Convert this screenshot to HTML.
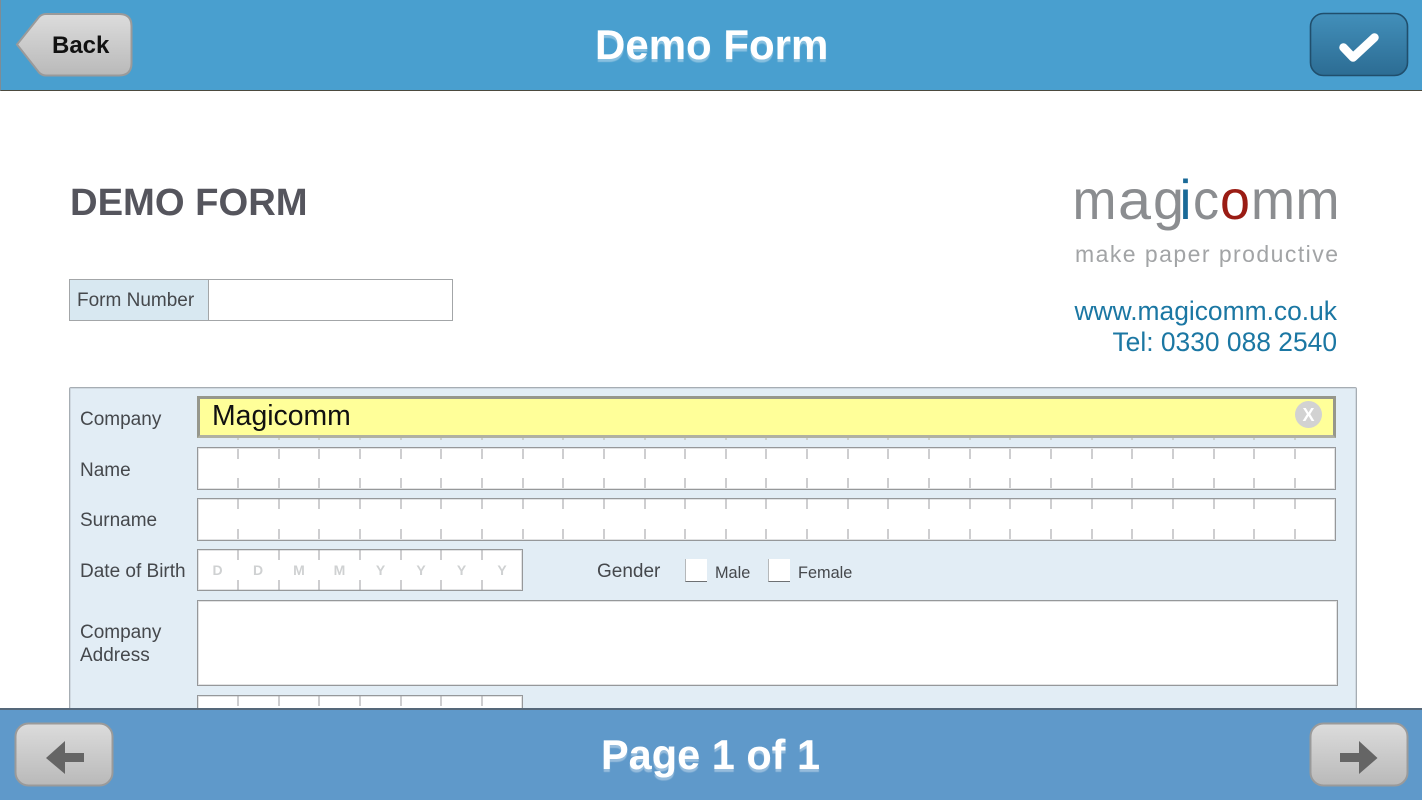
<!DOCTYPE html>
<html lang="en">
<head>
<meta charset="utf-8">
<title>Demo Form</title>
<style>
html,body{margin:0;padding:0;background:#fff}
#p{position:relative;width:1422px;height:800px;overflow:hidden;background:#fff;font-family:"Liberation Sans",sans-serif;filter:blur(.35px)}
.a{position:absolute;white-space:nowrap}
.l{position:absolute;white-space:nowrap;font-size:19px;color:#45484c;line-height:22px;left:80px}
.t{position:absolute;white-space:nowrap;font-weight:bold;color:#fff;font-size:42px;line-height:48px;text-shadow:0 3px 1px rgba(255,255,255,.35)}
.f{position:absolute;box-sizing:border-box;background:#fff;border:1px solid #96989a;box-shadow:inset 0 0 0 1px rgba(160,163,165,.3)}
svg{position:absolute;left:0;top:0}
</style>
</head>
<body>
<div id="p">
  <div class="a" style="left:70px;top:184px;font-size:38.2px;line-height:38px;font-weight:bold;color:#55555d">DEMO FORM</div>

  <!-- Form number -->
  <div class="a" style="left:69px;top:279px;width:384px;height:42px;box-sizing:border-box;background:#fff;border:1px solid #a3a6a8"></div>
  <div class="a" style="left:70px;top:280px;width:139px;height:40px;box-sizing:border-box;background:#d8e8f1;border-right:1px solid #a3a6a8"></div>
  <div class="l" style="left:77px;top:290px">Form Number</div>

  <!-- Logo -->
  <svg width="1422" height="800" viewBox="0 0 1422 800">
    <g font-family="Liberation Sans" font-size="56" fill="#8b8d90">
      <text x="1072.500" y="219" textLength="44" lengthAdjust="spacingAndGlyphs">m</text>
      <text x="1118" y="219" textLength="33" lengthAdjust="spacingAndGlyphs">a</text>
      <text x="1153" y="219" textLength="31" lengthAdjust="spacingAndGlyphs">g</text>
      <text x="1179.500" y="219" textLength="12" lengthAdjust="spacingAndGlyphs" fill="#1a6a98">i</text>
      <text x="1193" y="219" textLength="26" lengthAdjust="spacingAndGlyphs">c</text>
      <text x="1220" y="219" textLength="30" lengthAdjust="spacingAndGlyphs" fill="#9a1c14">o</text>
      <text x="1251" y="219" textLength="44" lengthAdjust="spacingAndGlyphs">m</text>
      <text x="1295.500" y="219" textLength="44" lengthAdjust="spacingAndGlyphs">m</text>
    </g>
    <text x="1075" y="262" font-family="Liberation Sans" font-size="23" textLength="263" lengthAdjust="spacing" fill="#a2a4a6">make paper productive</text>
  </svg>
  <div class="a" style="right:85px;top:296px;font-size:26.4px;line-height:31px;color:#1b77a3;text-align:right">www.magicomm.co.uk<br>Tel: 0330 088 2540</div>

  <!-- Panel -->
  <div class="a" style="left:69px;top:387px;width:1288px;height:340px;box-sizing:border-box;background:#e2edf5;border:1px solid #a6adb3;box-shadow:inset 0 0 0 1px rgba(166,173,179,.3);border-radius:2px"></div>

  <div class="l" style="top:409px">Company</div>
  <div class="l" style="top:460px">Name</div>
  <div class="l" style="top:510px">Surname</div>
  <div class="l" style="top:561px">Date of Birth</div>
  <div class="l" style="top:622px">Company</div>
  <div class="l" style="top:645px">Address</div>

  <div class="a" style="left:197px;top:396px;width:1139px;height:42px;box-sizing:border-box;background:#ffff99;border:3px solid #96978c;border-bottom-color:#b0b1a2"></div>
  <div class="a" style="left:212px;top:399px;font-size:28.4px;line-height:34px;color:#111">Magicomm</div>
  <div class="a" style="left:1295px;top:401px;width:27px;height:27px;border-radius:50%;background:#d2d2d2"></div>
  <div class="a" style="left:1295px;top:402px;width:27px;height:27px;line-height:27px;text-align:center;font-size:18px;font-weight:bold;color:#fff">X</div>

  <div class="f" style="left:197px;top:447px;width:1139px;height:43px"></div>
  <div class="f" style="left:197px;top:498px;width:1139px;height:43px"></div>
  <div class="f" style="left:197px;top:549px;width:326px;height:42px"></div>
  <div class="f" style="left:197px;top:600px;width:1141px;height:86px"></div>
  <div class="f" style="left:197px;top:695px;width:326px;height:42px"></div>

  <svg width="1422" height="800" viewBox="0 0 1422 800">
    <g stroke="#9c9ea0" stroke-width="1" fill="none">
      <path d="M238 449v10M279 449v10M319 449v10M360 449v10M401 449v10M441 449v10M482 449v10M523 449v10M563 449v10M604 449v10M645 449v10M685 449v10M726 449v10M766 449v10M807 449v10M848 449v10M888 449v10M929 449v10M970 449v10M1010 449v10M1051 449v10M1092 449v10M1132 449v10M1173 449v10M1214 449v10M1254 449v10M1295 449v10"/>
      <path d="M238 478v10M279 478v10M319 478v10M360 478v10M401 478v10M441 478v10M482 478v10M523 478v10M563 478v10M604 478v10M645 478v10M685 478v10M726 478v10M766 478v10M807 478v10M848 478v10M888 478v10M929 478v10M970 478v10M1010 478v10M1051 478v10M1092 478v10M1132 478v10M1173 478v10M1214 478v10M1254 478v10M1295 478v10"/>
      <path d="M238 499v10M279 499v10M319 499v10M360 499v10M401 499v10M441 499v10M482 499v10M523 499v10M563 499v10M604 499v10M645 499v10M685 499v10M726 499v10M766 499v10M807 499v10M848 499v10M888 499v10M929 499v10M970 499v10M1010 499v10M1051 499v10M1092 499v10M1132 499v10M1173 499v10M1214 499v10M1254 499v10M1295 499v10"/>
      <path d="M238 529v10M279 529v10M319 529v10M360 529v10M401 529v10M441 529v10M482 529v10M523 529v10M563 529v10M604 529v10M645 529v10M685 529v10M726 529v10M766 529v10M807 529v10M848 529v10M888 529v10M929 529v10M970 529v10M1010 529v10M1051 529v10M1092 529v10M1132 529v10M1173 529v10M1214 529v10M1254 529v10M1295 529v10"/>
      <path d="M238 550v10M279 550v10M319 550v10M360 550v10M401 550v10M441 550v10M482 550v10M238 580v10M279 580v10M319 580v10M360 580v10M401 580v10M441 580v10M482 580v10"/>
      <path d="M238 696v10M279 696v10M319 696v10M360 696v10M401 696v10M441 696v10M482 696v10"/>
      <path stroke="#b5b6a8" d="M238 438v2M279 438v2M319 438v2M360 438v2M401 438v2M441 438v2M482 438v2M523 438v2M563 438v2M604 438v2M645 438v2M685 438v2M726 438v2M766 438v2M807 438v2M848 438v2M888 438v2M929 438v2M970 438v2M1010 438v2M1051 438v2M1092 438v2M1132 438v2M1173 438v2M1214 438v2M1254 438v2M1295 438v2"/>
    </g>
    <g font-family="Liberation Sans" font-weight="bold" font-size="14" fill="#cfd1d2" text-anchor="middle">
      <text x="217.500" y="575">D</text><text x="258" y="575">D</text><text x="299" y="575">M</text><text x="339.500" y="575">M</text><text x="380.500" y="575">Y</text><text x="421" y="575">Y</text><text x="461.500" y="575">Y</text><text x="502" y="575">Y</text>
    </g>
  </svg>

  <div class="l" style="left:597px;top:561px">Gender</div>
  <div class="a" style="left:685px;top:559px;width:22px;height:23px;box-sizing:border-box;background:#fff;border-left:1px solid #b5b8ba;border-bottom:1px solid #6d7073"></div>
  <div class="a" style="left:768px;top:559px;width:22px;height:23px;box-sizing:border-box;background:#fff;border-left:1px solid #b5b8ba;border-bottom:1px solid #6d7073"></div>
  <div class="a" style="left:715px;top:563px;font-size:16.3px;line-height:20px;color:#45484c">Male</div>
  <div class="a" style="left:798px;top:563px;font-size:16.3px;line-height:20px;color:#45484c">Female</div>

  <!-- Header -->
  <div class="a" style="left:0;top:0;width:1422px;height:91px;box-sizing:border-box;background:#499fcf;border-bottom:1px solid #4c4a3e;border-left:1px solid #7d8c96"></div>
  <div class="t" style="left:595px;top:21px">Demo Form</div>

  <!-- Footer -->
  <div class="a" style="left:0;top:708px;width:1422px;height:92px;box-sizing:border-box;background:#5f99ca;border-top:2px solid #55687a"></div>
  <div class="t" style="left:601px;top:731px;font-size:41.5px">Page 1 of 1</div>

  <svg width="1422" height="800" viewBox="0 0 1422 800">
    <defs>
      <linearGradient id="g1" x1="0" y1="0" x2="0" y2="1"><stop offset="0" stop-color="#dcdcdc"/><stop offset="1" stop-color="#b9b9b9"/></linearGradient>
      <linearGradient id="g2" x1="0" y1="0" x2="0" y2="1"><stop offset="0" stop-color="#428fba"/><stop offset="1" stop-color="#2c6c93"/></linearGradient>
    </defs>
    <!-- Back -->
    <path d="M17 44.500L39 17Q42 14 46 14H119Q131.500 14 131.500 26V63Q131.500 75.500 119 75.500H46Q42 75.500 39 72.500Z" fill="url(#g1)" stroke="#9a9a9a" stroke-width="2"/>
    <text x="52" y="53" font-family="Liberation Sans" font-size="24" font-weight="bold" fill="#111">Back</text>
    <!-- Done -->
    <rect x="1310.500" y="13.500" width="97" height="62" rx="13" fill="url(#g2)" stroke="#204e6c" stroke-width="1.600"/>
    <path d="M1343.500 47.500L1353 57.500L1374.500 37.500" fill="none" stroke="#fff" stroke-width="8.500" stroke-linejoin="round" stroke-linecap="round"/>
    <!-- Prev -->
    <rect x="15.500" y="723.500" width="97" height="62" rx="13" fill="url(#g1)" stroke="#9a9a9a" stroke-width="2"/>
    <path d="M46 758L65 741V753H84V762H65V774Z" fill="#656565"/>
    <!-- Next -->
    <rect x="1310.500" y="723.500" width="97" height="62" rx="13" fill="url(#g1)" stroke="#9a9a9a" stroke-width="2"/>
    <path d="M1377.500 758L1359 741V753H1340V762H1359V774Z" fill="#656565"/>
  </svg>
</div>
</body>
</html>
